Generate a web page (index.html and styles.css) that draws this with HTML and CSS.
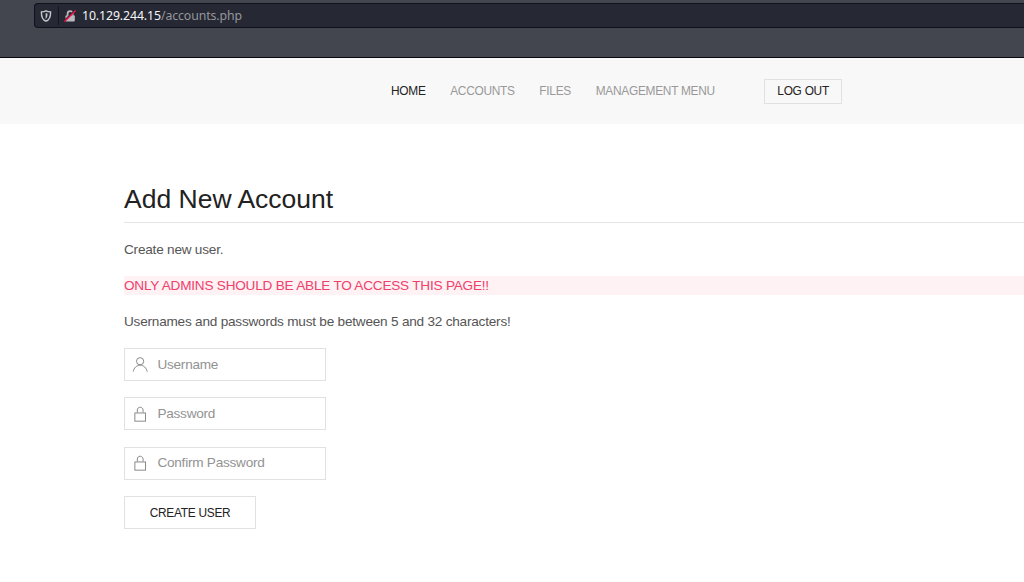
FILE: index.html
```
<!DOCTYPE html>
<html lang="en">
<head>
    <meta charset="UTF-8">
    <meta name="viewport" content="width=device-width, initial-scale=1.0">
    <title>Add New Account</title>
    <link rel="stylesheet" href="styles.css">
</head>
<body>
    <div class="browser">
        <div class="address-bar">
            <svg class="shield" viewBox="0 0 12 12">
                <path d="M6 .8C4.7 1.5 3 1.8 1.4 1.9C1.3 6.5 2.3 9.7 6 11.2C9.7 9.7 10.7 6.5 10.6 1.9C9 1.8 7.3 1.5 6 .8Z" fill="none" stroke="#c6c7cb" stroke-width="1.4"/>
                <path d="M5.6 3.2H7.4C7.6 6.3 7.2 7.8 5.6 8.9Z" fill="#c6c7cb"/>
            </svg>
            <span class="divider"></span>
            <svg class="insecure" viewBox="0 0 12 12">
                <path d="M3.6 5.5V3.6C3.6 .2 8.6 .2 8.6 3.6V5.5" fill="none" stroke="#b9babf" stroke-width="1.8"/>
                <rect x="1.5" y="5.2" width="9.3" height="6.4" rx="1" fill="#b9babf"/>
                <path d="M.2 10.6L10.8 .2" stroke="#262933" stroke-width="1.3"/>
                <path d="M.4 11.6L11.7 .6" stroke="#ee1148" stroke-width="1.5"/>
            </svg>
            <span class="url"><b>10.129.244.15</b>/accounts.php</span>
        </div>
    </div>

    <nav class="navbar">
        <a class="active" href="#">Home</a>
        <a href="#">Accounts</a>
        <a href="#">Files</a>
        <a href="#">Management Menu</a>
        <button class="btn btn-small">Log out</button>
    </nav>

    <main class="container">
        <h1>Add New Account</h1>
        <p>Create new user.</p>
        <p class="danger">ONLY ADMINS SHOULD BE ABLE TO ACCESS THIS PAGE!!</p>
        <p>Usernames and passwords must be between 5 and 32 characters!</p>
        <form>
            <label class="field">
                <svg viewBox="0 0 20 20">
                    <circle cx="9.9" cy="6.4" r="4.4"/>
                    <path d="M1.5,19 C2.3,14.5 5.8,11.2 10,11.2 C14.2,11.2 17.7,14.6 18.5,19.2"/>
                </svg>
                <input type="text" placeholder="Username">
            </label>
            <label class="field">
                <svg viewBox="0 0 20 20">
                    <rect x="3.5" y="8.5" width="13" height="10"/>
                    <path d="M6.5,8 L6.5,4.88 C6.5,3.01 8.07,1.5 10,1.5 C11.93,1.5 13.5,3.01 13.5,4.88 L13.5,8"/>
                </svg>
                <input type="password" placeholder="Password">
            </label>
            <label class="field">
                <svg viewBox="0 0 20 20">
                    <rect x="3.5" y="8.5" width="13" height="10"/>
                    <path d="M6.5,8 L6.5,4.88 C6.5,3.01 8.07,1.5 10,1.5 C11.93,1.5 13.5,3.01 13.5,4.88 L13.5,8"/>
                </svg>
                <input type="password" placeholder="Confirm Password">
            </label>
            <button class="btn" type="button">Create user</button>
        </form>
    </main>
</body>
</html>
```
FILE: styles.css
```
* {
    box-sizing: border-box;
}

body {
    margin: 0;
    font-family: "Liberation Sans", Arial, sans-serif;
    font-size: 13.6px;
    line-height: 19.7px;
    letter-spacing: -0.22px;
    color: #555;
    background: #fff;
    overflow: hidden;
}

.browser {
    height: 58px;
    padding: 3px 0 0 34px;
    background: #43464e;
    border-bottom: 1px solid #08080c;
}

.address-bar {
    display: flex;
    align-items: center;
    height: 25px;
    padding-left: 5px;
    background: #262933;
    border: 1px solid #10121b;
    border-right: 0;
    border-radius: 4px 0 0 4px;
}

.shield,
.insecure {
    width: 12px;
    height: 12px;
}

.divider {
    width: 1px;
    height: 19px;
    margin: 0 5px 0 6px;
    background: #15171f;
}

.url {
    margin-left: 6px;
    font-family: "Noto Sans", sans-serif;
    font-size: 12.3px;
    letter-spacing: -0.1px;
    color: #95969b;
}

.url b {
    font-weight: normal;
    color: #f5f5f7;
}

.navbar {
    display: flex;
    align-items: center;
    gap: 24.6px;
    height: 66px;
    padding-left: 391px;
    background: #f8f8f8;
}

.navbar a {
    padding-top: 2px;
    font-size: 11.9px;
    letter-spacing: -0.27px;
    color: #999;
    text-decoration: none;
    text-transform: uppercase;
    white-space: nowrap;
}

.navbar a.active {
    color: #222;
}

.btn {
    width: 132px;
    height: 33px;
    padding: 0;
    font-family: inherit;
    font-size: 11.9px;
    letter-spacing: -0.27px;
    color: #222;
    text-transform: uppercase;
    background: transparent;
    border: 1px solid #e1e1e1;
}

.btn-small {
    width: 78px;
    height: 25px;
    margin-left: 24.6px;
}

.container {
    padding: 58px 0 0 124px;
}

h1 {
    margin: 0 0 16.7px;
    padding-bottom: 6px;
    font-size: 26.5px;
    font-weight: normal;
    line-height: 34px;
    letter-spacing: 0;
    color: #222;
    border-bottom: 1px solid #e5e5e5;
}

p {
    margin: 0 0 16.4px;
}

.danger {
    color: #f0406a;
    background: #fef2f5;
}

.field {
    display: flex;
    align-items: center;
    width: 202px;
    height: 33px;
    margin-bottom: 16.4px;
    padding-left: 7px;
    border: 1px solid #e1e1e1;
}

.field svg {
    width: 16.4px;
    height: 16.4px;
    fill: none;
    stroke: #888;
    stroke-width: 1.2;
}

.field input {
    flex: 1;
    min-width: 0;
    padding: 0 0 0 9px;
    font: inherit;
    letter-spacing: -0.24px;
    background: none;
    border: 0;
    outline: 0;
}

.field input::placeholder {
    color: #929292;
}
```
